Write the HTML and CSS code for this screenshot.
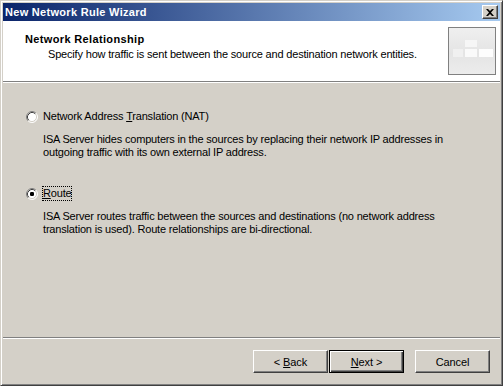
FILE: index.html
```html
<!DOCTYPE html>
<html>
<head>
<meta charset="utf-8">
<link rel="stylesheet" href="styles.css">
</head>
<body>
<div class="window">
  <div class="titlebar">
    <span class="title">New Network Rule Wizard</span>
    <span class="close">
      <svg width="8" height="7" viewBox="0 0 8 7"><path d="M0 0h2l2 2 2-2h2L5 3.5 8 7H6L4 5 2 7H0l3-3.5z" fill="#000"/></svg>
    </span>
  </div>
  <div class="client">
    <div class="header">
      <div class="htext">
        <div class="htitle">Network Relationship</div>
        <div class="hsub">Specify how traffic is sent between the source and destination network entities.</div>
      </div>
      <div class="hicon">
        <div class="cell c1"></div><div class="cell c2"></div><div class="cell c3"></div><div class="cell c4"></div>
      </div>
    </div>
    <div class="body">
      <div class="option">
        <div class="row">
          <svg class="radio" width="12" height="12" viewBox="0 0 12 12">
            <circle cx="6" cy="6" r="5" fill="#fff"/>
            <path d="M2.11 9.89A5.5 5.5 0 0 1 9.89 2.11" fill="none" stroke="#808080"/>
            <path d="M9.89 2.11A5.5 5.5 0 0 1 2.11 9.89" fill="none" stroke="#fff"/>
            <path d="M2.82 9.18A4.5 4.5 0 0 1 9.18 2.82" fill="none" stroke="#404040"/>
            <path d="M9.18 2.82A4.5 4.5 0 0 1 2.82 9.18" fill="none" stroke="#d4d0c8"/>
          </svg>
          <span class="label">Network Address <u>T</u>ranslation (NAT)</span>
        </div>
        <p class="desc">ISA Server hides computers in the sources by replacing their network IP addresses in<br>outgoing traffic with its own external IP address.</p>
      </div>
      <div class="option second">
        <div class="row">
          <svg class="radio" width="12" height="12" viewBox="0 0 12 12">
            <circle cx="6" cy="6" r="5" fill="#fff"/>
            <path d="M2.11 9.89A5.5 5.5 0 0 1 9.89 2.11" fill="none" stroke="#808080"/>
            <path d="M9.89 2.11A5.5 5.5 0 0 1 2.11 9.89" fill="none" stroke="#fff"/>
            <path d="M2.82 9.18A4.5 4.5 0 0 1 9.18 2.82" fill="none" stroke="#404040"/>
            <path d="M9.18 2.82A4.5 4.5 0 0 1 2.82 9.18" fill="none" stroke="#d4d0c8"/>
            <rect x="4" y="4" width="4" height="4" rx="1.2" fill="#000"/>
          </svg>
          <span class="label focus"><u>R</u>oute</span>
        </div>
        <p class="desc">ISA Server routes traffic between the sources and destinations (no network address<br>translation is used). Route relationships are bi-directional.</p>
      </div>
    </div>
    <div class="sep"></div>
    <div class="buttons">
      <button class="btn back">&lt; <u>B</u>ack</button>
      <button class="btn next default"><u>N</u>ext &gt;</button>
      <button class="btn cancel">Cancel</button>
    </div>
  </div>
</div>
</body>
</html>
```
FILE: styles.css
```css
* { box-sizing: border-box; }
html, body { margin: 0; padding: 0; }
body {
  width: 503px;
  height: 386px;
  overflow: hidden;
  font-family: "Liberation Sans", Arial, sans-serif;
  font-size: 11px;
  letter-spacing: -0.18px;
  color: #000;
  background: #d4d0c8;
}
.window {
  width: 503px;
  height: 386px;
  display: flex;
  flex-direction: column;
  border: 1px solid;
  border-color: #d4d0c8 #404040 #404040 #d4d0c8;
  box-shadow: inset 1px 1px #fff, inset -1px -1px #808080;
  padding: 2px;
  background: #d4d0c8;
}
.titlebar {
  height: 18px;
  flex: none;
  display: flex;
  align-items: center;
  justify-content: space-between;
  padding: 0 2px 0 2px;
  background: linear-gradient(to right, #0a246a, #a6caf0);
}
.title {
  color: #fff;
  font-weight: bold;
  font-size: 11px;
  letter-spacing: 0.3px;
}
.close {
  width: 16px;
  height: 14px;
  display: flex;
  align-items: center;
  justify-content: center;
  background: #d4d0c8;
  border: 1px solid;
  border-color: #fff #404040 #404040 #fff;
  box-shadow: inset -1px -1px #808080;
}
.client {
  flex: 1;
  display: flex;
  flex-direction: column;
}
.header {
  height: 61px;
  flex: none;
  background: #fff;
  border-bottom: 1px solid #808080;
  box-shadow: 0 1px #fff;
  display: flex;
  justify-content: space-between;
  margin-bottom: 1px;
}
.htext { padding: 12px 0 0 22px; }
.htitle { font-weight: bold; line-height: 13px; letter-spacing: 0.35px; }
.hsub { line-height: 13px; margin-top: 2px; padding-left: 23px; }
.hicon {
  position: relative;
  width: 48px;
  height: 48px;
  margin: 6px 4px 0 0;
  border: 1px solid #808080;
  background: linear-gradient(to bottom, #efefef, #e4e4e4 55%, #ececec);
}
.cell { position: absolute; background: #f6f6f6; }
.c1 { left: 16px; top: 12px; width: 12px; height: 7px; }
.c2 { left: 16px; top: 21px; width: 12px; height: 8px; background: #fafafa; }
.c3 { left: 30px; top: 21px; width: 14px; height: 8px; background: #fdfdfd; }
.c4 { left: 4px; top: 21px; width: 10px; height: 8px; background: #f0f0f0; }
.body {
  flex: 1;
  padding: 27px 0 0 23px;
}
.option.second { margin-top: 28px; }
.row {
  display: flex;
  align-items: center;
  height: 13px;
}
.radio { flex: none; margin-right: 5px; }
.label { line-height: 13px; }
.focus { outline: 1px dotted #000; outline-offset: 0; }
.desc {
  margin: 10px 0 0 17px;
  line-height: 13px;
}
.sep {
  height: 2px;
  flex: none;
  border-top: 1px solid #808080;
  border-bottom: 1px solid #fff;
}
.buttons {
  height: 44px;
  flex: none;
  display: flex;
  justify-content: flex-end;
  padding: 11px 10px 0 0;
}
.btn {
  width: 75px;
  height: 23px;
  font-family: "Liberation Sans", Arial, sans-serif;
  font-size: 11px;
  letter-spacing: -0.1px;
  color: #000;
  background: #d4d0c8;
  border: 1px solid;
  border-color: #fff #404040 #404040 #fff;
  box-shadow: inset -1px -1px #808080;
  padding: 0;
}
.next { margin-left: 1px; margin-right: 11px; }
.default {
  border: 1px solid #000;
  box-shadow: inset 1px 1px #fff, inset -1px -1px #404040, inset -2px -2px #808080;
}
```
